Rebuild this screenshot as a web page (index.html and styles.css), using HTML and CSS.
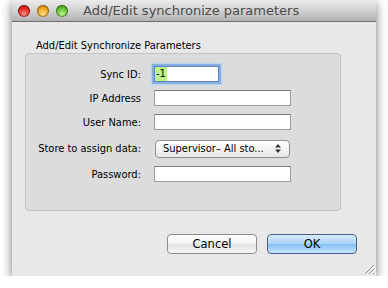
FILE: index.html
```html
<!DOCTYPE html>
<html lang="en">
<head>
  <meta charset="UTF-8" />
  <title>Add/Edit synchronize parameters</title>
  <link rel="stylesheet" href="styles.css">
</head>
<body>
  <div class="window">
    <div class="titlebar">
      <div class="lights">
        <span class="light red"></span>
        <span class="light orange"></span>
        <span class="light green"></span>
      </div>
      <span class="title">Add/Edit synchronize parameters</span>
    </div>
    <div class="content">
      <div class="group-label">Add/Edit Synchronize Parameters</div>
      <div class="group">
        <div class="row">
          <label class="label">Sync ID:</label>
          <div class="field short focused"><span class="sel">-1</span></div>
        </div>
        <div class="row">
          <label class="label">IP Address</label>
          <div class="field"></div>
        </div>
        <div class="row">
          <label class="label">User Name:</label>
          <div class="field"></div>
        </div>
        <div class="row row-popup">
          <label class="label">Store to assign data:</label>
          <div class="popup">
            <span>Supervisor– All sto...</span>
            <svg width="6" height="9" viewBox="0 0 6 9"><path d="M0 3.5L3 0L6 3.5Z M0 5.5L3 9L6 5.5Z" fill="#333"/></svg>
          </div>
        </div>
        <div class="row">
          <label class="label">Password:</label>
          <div class="field"></div>
        </div>
      </div>
      <div class="buttons">
        <button class="btn">Cancel</button>
        <button class="btn default">OK</button>
      </div>
    </div>
    <svg class="grip" width="12" height="12" viewBox="0 0 12 12">
      <path d="M11 2L2 11 M11 6L6 11 M11 10L10 11" stroke="#8a8a8a" stroke-width="1"/>
      <path d="M12 3L3 12 M12 7L7 12" stroke="#ffffff" stroke-width="1"/>
    </svg>
  </div>
</body>
</html>
```

FILE: styles.css
```css
body {
  margin: 0;
  background: #fff;
  font-family: 'DejaVu Sans', 'Liberation Sans', sans-serif;
  color: #000;
}
.window {
  position: relative;
  margin-left: 12px;
  width: 364px;
  height: 276px;
  background: #e8e8e8;
  box-shadow: 0 3px 10px rgba(0,0,0,0.55);
  display: flex;
  flex-direction: column;
}
.titlebar {
  height: 21px;
  border-bottom: 1px solid #6f6f6f;
  background: linear-gradient(#ececec, #d2d2d2 50%, #b2b2b2);
  display: flex;
  align-items: center;
}
.lights {
  display: flex;
  gap: 7px;
  padding-left: 6px;
}
.light {
  width: 12px;
  height: 12px;
  border-radius: 50%;
  box-shadow: inset 0 0 0 1px rgba(0,0,0,0.35);
}
.red {
  background: radial-gradient(circle at 50% 75%, #ff8d86, #e0261c 55%, #9e1208);
}
.orange {
  background: radial-gradient(circle at 50% 75%, #ffe08a, #f1a21b 55%, #a76100);
}
.green {
  background: radial-gradient(circle at 50% 75%, #c4f28c, #5fbd30 55%, #2d7a0c);
}
.title {
  margin-left: 15px;
  font-size: 13px;
  color: #4a4a4a;
}
.content {
  flex: 1;
  padding: 0 19px 0 13px;
  display: flex;
  flex-direction: column;
  font-family: 'DejaVu Sans Condensed', 'DejaVu Sans', sans-serif;
}
.group-label {
  font-size: 11px;
  line-height: 13px;
  margin: 17px 0 1px 11px;
}
.group {
  height: 158px;
  box-sizing: border-box;
  width: 316px;
  background: #dcdcdc;
  border: 1px solid #c4c4c4;
  border-radius: 4px;
  padding-top: 8px;
}
.row {
  display: flex;
  align-items: center;
  height: 24px;
}
.row-popup {
  height: 27px;
  margin-top: 1px;
}
.label {
  width: 115px;
  text-align: right;
  font-size: 11px;
  margin-right: 13px;
}
.field {
  width: 135px;
  height: 14px;
  background: #fff;
  border: 1px solid #9c9c9c;
  border-top-color: #7d7d7d;
  font-size: 11px;
  display: flex;
  align-items: center;
}
.field.short {
  width: 63px;
}
.field.focused {
  border-color: #5f86c2;
  box-shadow: 0 0 0 2px #86aee0, 0 0 2px 3px #b7cfee;
}
.sel {
  background: #bdf584;
  padding: 0 1px;
  line-height: 14px;
}
.popup {
  box-sizing: border-box;
  width: 135px;
  height: 18px;
  margin-left: 1px;
  border: 1px solid #8f8f8f;
  border-radius: 4px;
  background: linear-gradient(#ffffff, #f4f4f4 50%, #e6e6e6);
  display: flex;
  align-items: center;
  justify-content: space-between;
  padding: 0 8px 0 7px;
  font-size: 11px;
}
.buttons {
  display: flex;
  justify-content: flex-end;
  gap: 10px;
  margin-top: 23px;
}
.btn {
  width: 90px;
  height: 20px;
  font-family: 'DejaVu Sans', sans-serif;
  font-size: 11.5px;
  border: 1px solid #8c8c8c;
  border-radius: 4px;
  background: linear-gradient(#ffffff, #f2f2f2 50%, #e4e4e4 51%, #f6f6f6);
  padding: 0;
  color: #000;
}
.btn.default {
  border-color: #4b5f8f;
  background: linear-gradient(#d9ecfd, #a9d3f7 50%, #84c0f2 51%, #c9e6fd);
}
.grip {
  position: absolute;
  right: 1px;
  bottom: 1px;
}
```
